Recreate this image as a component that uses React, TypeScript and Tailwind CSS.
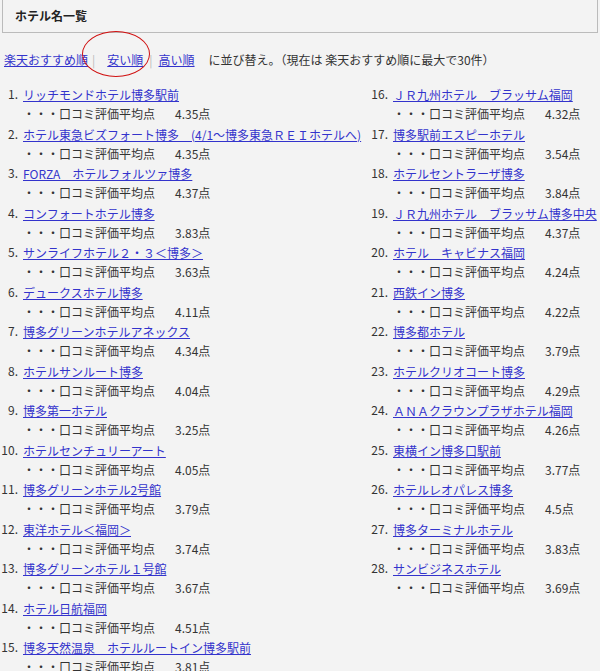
import React from 'react';

const left: [string, string][] = [
  ['リッチモンドホテル博多駅前', '4.35'],
  ['ホテル東急ビズフォート博多　(4/1～博多東急ＲＥＩホテルへ)', '4.35'],
  ['FORZA　ホテルフォルツァ博多', '4.37'],
  ['コンフォートホテル博多', '3.83'],
  ['サンライフホテル２・３＜博多＞', '3.63'],
  ['デュークスホテル博多', '4.11'],
  ['博多グリーンホテルアネックス', '4.34'],
  ['ホテルサンルート博多', '4.04'],
  ['博多第一ホテル', '3.25'],
  ['ホテルセンチュリーアート', '4.05'],
  ['博多グリーンホテル2号館', '3.79'],
  ['東洋ホテル＜福岡＞', '3.74'],
  ['博多グリーンホテル１号館', '3.67'],
  ['ホテル日航福岡', '4.51'],
  ['博多天然温泉　ホテルルートイン博多駅前', '3.81'],
];
const right: [string, string][] = [
  ['ＪＲ九州ホテル　ブラッサム福岡', '4.32'],
  ['博多駅前エスピーホテル', '3.54'],
  ['ホテルセントラーザ博多', '3.84'],
  ['ＪＲ九州ホテル　ブラッサム博多中央', '4.37'],
  ['ホテル　キャビナス福岡', '4.24'],
  ['西鉄イン博多', '4.22'],
  ['博多都ホテル', '3.79'],
  ['ホテルクリオコート博多', '4.29'],
  ['ＡＮＡクラウンプラザホテル福岡', '4.26'],
  ['東横イン博多口駅前', '3.77'],
  ['ホテルレオパレス博多', '4.5'],
  ['博多ターミナルホテル', '3.83'],
  ['サンビジネスホテル', '3.69'],
];

const Item = ({ n, name, score }: { n: number; name: string; score: string }) => (
  <li className="flex h-[39.5px]">
    <span className="w-[18px] shrink-0 text-right mr-[5px]">{n}.</span>
    <div className="whitespace-nowrap">
      <a href="#" className="text-[#3333cc] underline leading-[19px] block">{name}</a>
      <div className="leading-[19px]">・・・口コミ評価平均点<span className="ml-[20px]">{score}点</span></div>
    </div>
  </li>
);

const App = () => {
  return (
    <div className="w-[600px] h-[671px] overflow-hidden bg-[#f3f3f3] text-[#333] text-[12px]" style={{ fontFamily: '"Noto Sans CJK JP", "Noto Sans", sans-serif' }}>
      <div className="border border-[#bbb] border-t-0 mx-[2px] h-[33px] px-[12px] flex items-center font-bold text-[#222]">ホテル名一覧</div>
      <div className="mt-[18px] ml-[4px] flex items-center whitespace-nowrap relative">
        <a href="#" className="text-[#3333cc] underline">楽天おすすめ順</a>
        <span className="text-[#bbb] mx-[4px]">|</span>
        <a href="#" className="text-[#3333cc] underline ml-[8px]">安い順</a>
        <span className="text-[#bbb] mx-[6px]">|</span>
        <a href="#" className="text-[#3333cc] underline">高い順</a>
        <span className="ml-[14px]">に並び替え。（現在は 楽天おすすめ順に最大で30件）</span>
        <span className="absolute left-[78px] top-[-20px] w-[68px] h-[46px] border-[1.5px] border-[#d01010] rounded-[50%]" />
      </div>
      <div className="flex mt-[16px]">
        <ol className="w-[370px]">
          {left.map((h, i) => <Item key={i} n={i + 1} name={h[0]} score={h[1]} />)}
        </ol>
        <ol>
          {right.map((h, i) => <Item key={i} n={i + 16} name={h[0]} score={h[1]} />)}
        </ol>
      </div>
    </div>
  );
};

export default App;
